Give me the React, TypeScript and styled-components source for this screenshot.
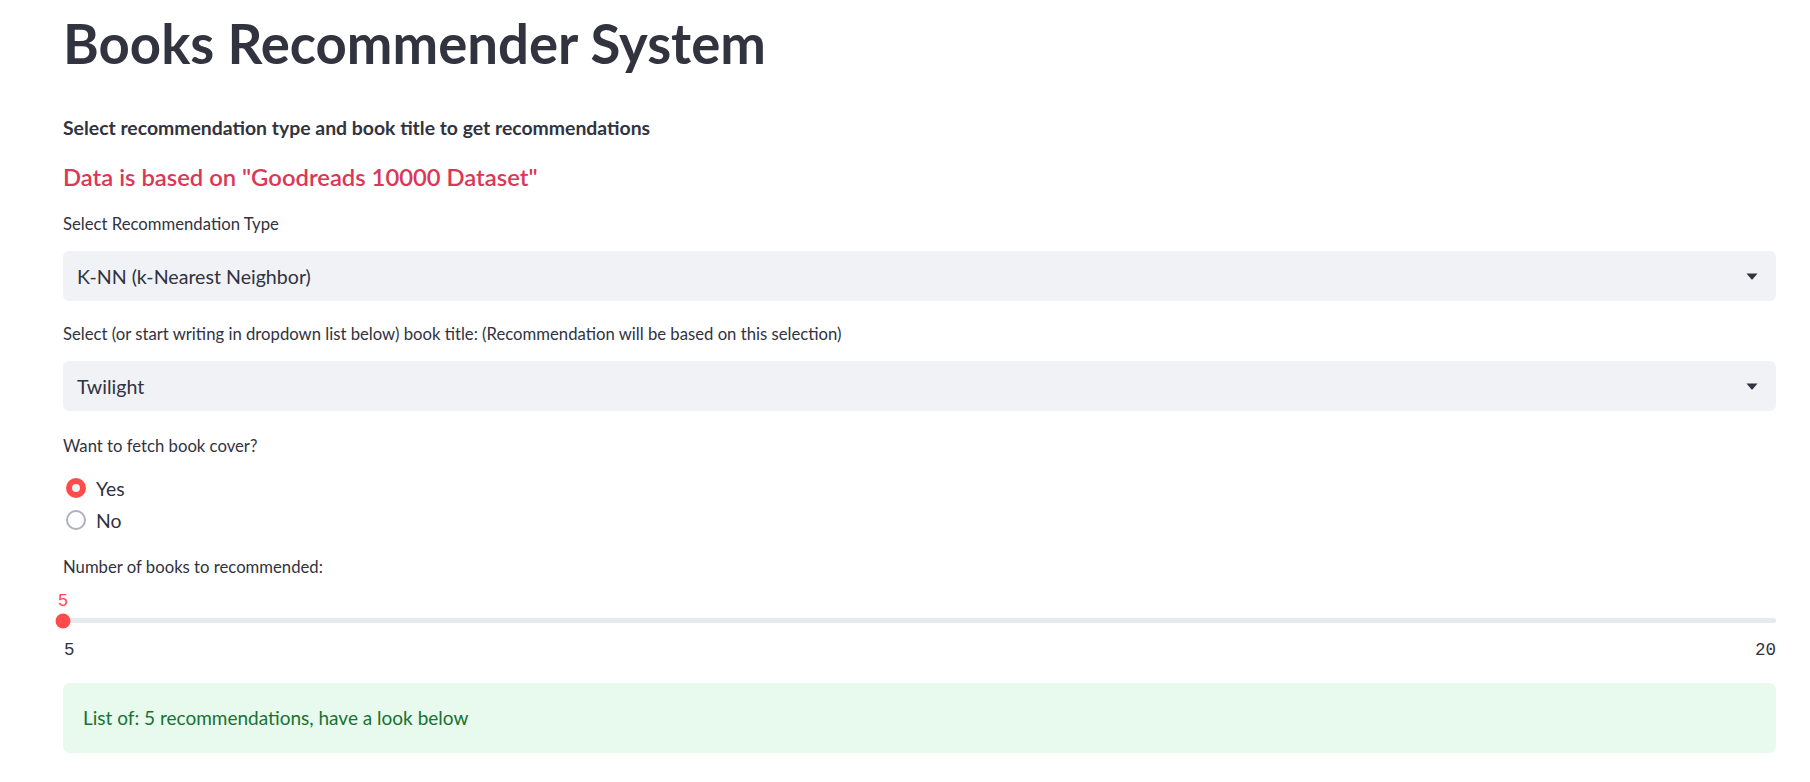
import React from "react";
import styled, { createGlobalStyle } from "styled-components";

const GlobalStyle = createGlobalStyle`
  html, body {
    margin: 0;
    padding: 0;
    background: #ffffff;
  }
  body {
    font-family: Lato, "Noto Sans", "Liberation Sans", sans-serif;
    color: #31333f;
  }
  * { box-sizing: border-box; }
`;

const Page = styled.main`
  display: flex;
  flex-direction: column;
  padding: 10px 34px 0 63px;
  width: 1810px;
`;

const Title = styled.h1`
  margin: 0;
  font-size: 54.5px;
  line-height: 66px;
  font-weight: 700;
  color: #31333f;
`;

const Lead = styled.p`
  margin: 37px 0 0;
  font-size: 19.4px;
  line-height: 30px;
  font-weight: 700;
  color: #31333f;
`;

const Notice = styled.h4`
  margin: 18px 0 0;
  font-size: 23.8px;
  line-height: 32px;
  font-weight: 600;
  color: #db3756;
`;

const Label = styled.label<{ $gap: number }>`
  display: block;
  margin-top: ${(p) => p.$gap}px;
  font-size: 16.7px;
  line-height: 24px;
  font-weight: 400;
  color: #31333f;
`;

const SelectBox = styled.div`
  margin-top: 15px;
  height: 50px;
  display: flex;
  align-items: center;
  justify-content: space-between;
  padding: 0 18px 0 14px;
  background: #f0f2f6;
  border-radius: 6px;
  font-size: 19.6px;
  color: #31333f;
`;

const Caret = styled.svg`
  width: 12px;
  height: 7px;
  flex: none;
`;

const RadioGroup = styled.div`
  margin-top: 14px;
  display: flex;
  flex-direction: column;
`;

const RadioRow = styled.div`
  height: 32px;
  display: flex;
  align-items: center;
  gap: 10px;
  padding-left: 3px;
  font-size: 19.4px;
  color: #31333f;
`;

const RadioDot = styled.span<{ $checked: boolean }>`
  width: 20px;
  height: 20px;
  border-radius: 50%;
  flex: none;
  border: ${(p) => (p.$checked ? "6.5px solid #ff4b4b" : "2.5px solid #aeb1ba")};
  background: ${(p) => (p.$checked ? "#f0f2f6" : "#ffffff")};
`;

const Slider = styled.div`
  margin-top: 11px;
  display: flex;
  flex-direction: column;
  font-family: "Liberation Mono", "DejaVu Sans Mono", monospace;
`;

const ValueRow = styled.div`
  position: relative;
  height: 22px;
`;

const ThumbValue = styled.span`
  position: absolute;
  top: 0;
  transform: translateX(-50%);
  font-size: 17.5px;
  line-height: 22px;
  color: #ff4b4b;
`;

const TrackRow = styled.div`
  position: relative;
  height: 17px;
  display: flex;
  align-items: center;
`;

const Track = styled.div`
  width: 100%;
  height: 5px;
  border-radius: 3px;
  background: #e6e9ef;
`;

const Thumb = styled.span`
  position: absolute;
  top: 50%;
  width: 15px;
  height: 15px;
  border-radius: 50%;
  background: #ff4b4b;
  transform: translate(-50%, -50%);
`;

const TickRow = styled.div`
  margin-top: 10px;
  display: flex;
  justify-content: space-between;
  font-size: 17.5px;
  line-height: 22px;
  color: #31333f;
  padding-left: 1px;
`;

const Success = styled.div`
  margin-top: 22px;
  padding: 20px 20px;
  border-radius: 7px;
  background: #e8f9ee;
  color: #177233;
  font-size: 19px;
  line-height: 30px;
`;

const CaretIcon = () => (
  <Caret viewBox="0 0 12 7">
    <path d="M0.5 0.5 L11.5 0.5 L6.6 6.2 Q6 6.8 5.4 6.2 Z" fill="#31333f" />
  </Caret>
);

const Select = ({ value }: { value: string }) => (
  <SelectBox>
    <span>{value}</span>
    <CaretIcon />
  </SelectBox>
);

export default function App() {
  const min = 5;
  const max = 20;
  const value = 5;
  const pct = ((value - min) / (max - min)) * 100;
  return (
    <>
      <GlobalStyle />
      <Page>
        <Title>Books Recommender System</Title>
        <Lead>Select recommendation type and book title to get recommendations</Lead>
        <Notice>Data is based on "Goodreads 10000 Dataset"</Notice>

        <Label $gap={19}>Select Recommendation Type</Label>
        <Select value="K-NN (k-Nearest Neighbor)" />

        <Label $gap={21}>
          Select (or start writing in dropdown list below) book title: (Recommendation will be based on this selection)
        </Label>
        <Select value="Twilight" />

        <Label $gap={23}>Want to fetch book cover?</Label>
        <RadioGroup>
          <RadioRow>
            <RadioDot $checked={true} />
            <span>Yes</span>
          </RadioRow>
          <RadioRow>
            <RadioDot $checked={false} />
            <span>No</span>
          </RadioRow>
        </RadioGroup>

        <Label $gap={19}>Number of books to recommended:</Label>
        <Slider>
          <ValueRow>
            <ThumbValue style={{ left: `${pct}%` }}>{value}</ThumbValue>
          </ValueRow>
          <TrackRow>
            <Track />
            <Thumb style={{ left: `${pct}%` }} />
          </TrackRow>
          <TickRow>
            <span>{min}</span>
            <span>{max}</span>
          </TickRow>
        </Slider>

        <Success>List of: 5 recommendations, have a look below</Success>
      </Page>
    </>
  );
}
